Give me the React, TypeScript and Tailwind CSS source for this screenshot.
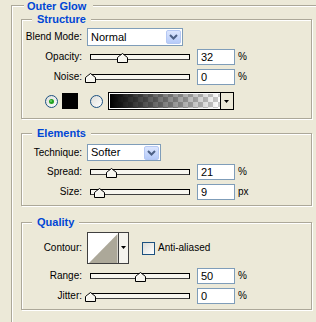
import { clsx } from "clsx";
import type { ReactNode } from "react";

const TRACK_START = 3;
const TRACK_SPAN = 99;

function GroupBox({
  title,
  className,
  legendClass,
  children,
}: {
  title: string;
  className?: string;
  legendClass?: string;
  children?: ReactNode;
}) {
  return (
    <div
      className={clsx(
        "relative border border-[#ACA899] shadow-[1px_1px_0_#fff,inset_1px_1px_0_#fff]",
        className
      )}
    >
      <span
        className={clsx(
          "absolute bg-[#ECE9D8] text-[11px] font-bold leading-[11px] text-[#0046D5]",
          legendClass ?? "-top-[6px] left-[10px] pl-[5px] pr-[5px]"
        )}
      >
        {title}
      </span>
      {children}
    </div>
  );
}

function Label({ children }: { children: ReactNode }) {
  return <span className="w-[60px] shrink-0 text-right">{children}</span>;
}

function Chevron() {
  return (
    <span className="ml-auto mr-[1px] flex h-[14px] w-[15px] items-center justify-center rounded-[2px] border border-[#B5C8F3] bg-gradient-to-b from-[#DCE6FE] to-[#B6CBF9]">
      <svg width="9" height="6" viewBox="0 0 9 6">
        <polyline points="1,1 4.5,4.5 8,1" fill="none" stroke="#4D6185" strokeWidth="2" />
      </svg>
    </span>
  );
}

function Select({ value, width }: { value: string; width: string }) {
  return (
    <div className={clsx("ml-[5px] flex h-full items-center border border-[#7F9DB9] bg-white", width)}>
      <span className="pl-[3px] text-[11px]">{value}</span>
      <Chevron />
    </div>
  );
}

function Thumb({ pct }: { pct: number }) {
  const left = TRACK_START + pct * TRACK_SPAN - 5;
  return (
    <svg
      width="11"
      height="10"
      viewBox="0 0 11 10"
      className="absolute top-[4px]"
      style={{ left }}
    >
      <path d="M0.5 9.5V4.5L5.5 0.5L10.5 4.5V9.5Z" fill="#F7F6EF" stroke="#000" />
      <path d="M1.5 8.5V5L5.5 1.8" fill="none" stroke="#fff" />
    </svg>
  );
}

function SliderRow({
  label,
  value,
  unit,
  pct,
  className,
}: {
  label: string;
  value: string;
  unit: string;
  pct: number;
  className?: string;
}) {
  return (
    <div className={clsx("flex h-4 items-center", className)}>
      <Label>{label}</Label>
      <div className="relative ml-[5px] h-4 w-[106px] shrink-0">
        <div className="ml-[3px] mt-[5px] h-[6px] w-[100px] border border-black border-b-[#404040] bg-[#F7F6EF]" />
        <Thumb pct={pct} />
      </div>
      <div className="ml-[4px] flex h-4 w-[38px] items-center border border-[#7F9DB9] bg-white pl-[3px] text-[11px]">
        {value}
      </div>
      <span className="ml-[3px] text-[10px]">{unit}</span>
    </div>
  );
}

function Radio({ checked }: { checked?: boolean }) {
  return (
    <svg width="13" height="13" viewBox="0 0 13 13">
      <defs>
        <linearGradient id={checked ? "rg1" : "rg2"} x1="0" y1="0" x2="1" y2="1">
          <stop offset="0" stopColor="#DCDCD7" />
          <stop offset="1" stopColor="#FFFFFF" />
        </linearGradient>
      </defs>
      <circle cx="6.5" cy="6.5" r="6" fill={`url(#${checked ? "rg1" : "rg2"})`} stroke="#1C5180" />
      {checked && <circle cx="6.5" cy="6.5" r="2.5" fill="#21A121" />}
      {checked && <circle cx="6" cy="6" r="1" fill="#6BD46B" />}
    </svg>
  );
}

function GradientSwatch() {
  return (
    <svg width="126" height="18" viewBox="0 0 126 18">
      <defs>
        <pattern id="chk" width="10" height="10" patternUnits="userSpaceOnUse">
          <rect width="10" height="10" fill="#FFFFFF" />
          <rect width="5" height="5" fill="#CBCBCB" />
          <rect x="5" y="5" width="5" height="5" fill="#CBCBCB" />
        </pattern>
        <linearGradient id="fade" x1="0" y1="0" x2="1" y2="0">
          <stop offset="0" stopColor="#000" />
          <stop offset="1" stopColor="#000" stopOpacity="0" />
        </linearGradient>
      </defs>
      <rect x="0.5" y="0.5" width="125" height="17" fill="#ECE9D8" stroke="#000" />
      <rect x="1" y="1" width="111" height="16" fill="#fff" />
      <rect x="2" y="2" width="110" height="14" fill="url(#chk)" />
      <rect x="2" y="2" width="110" height="14" fill="url(#fade)" />
      <line x1="112.5" y1="0" x2="112.5" y2="18" stroke="#000" />
      <path d="M116 8h5l-2.5 3z" fill="#000" />
    </svg>
  );
}

function ContourPicker() {
  return (
    <svg width="42" height="32" viewBox="0 0 42 32">
      <rect x="0.5" y="0.5" width="41" height="31" fill="#F5F4EE" stroke="#404040" />
      <rect x="1" y="1" width="30" height="30" fill="#FFFFFF" />
      <path d="M2 31L30.5 2V31Z" fill="#ACA899" />
      <line x1="31.5" y1="1" x2="31.5" y2="31" stroke="#404040" />
      <path d="M34 14h5l-2.5 3z" fill="#000" />
    </svg>
  );
}

export default function App() {
  return (
    <div className="relative h-[322px] w-[316px] overflow-hidden bg-[#ECE9D8] pl-[11px] pt-[5px] font-['Liberation_Sans',Arial,sans-serif] text-[10px] leading-none text-black">
      <GroupBox
        title="Outer Glow"
        className="h-[340px] w-[330px] pl-[9px] pt-[13px]"
        legendClass="-top-[5px] left-[12px] pl-[3px] pr-[7px]"
      >
        <GroupBox title="Structure" className="h-[100px] w-[291px] pt-[8px]">
          <div className="flex h-[18px] items-center">
            <Label>Blend Mode:</Label>
            <Select value="Normal" width="w-[96px]" />
          </div>
          <SliderRow className="mt-[3px]" label="Opacity:" value="32" unit="%" pct={0.32} />
          <SliderRow className="mt-[4px]" label="Noise:" value="0" unit="%" pct={0} />
          <div className="mt-[7px] flex h-[18px] items-center pl-[23px]">
            <Radio checked />
            <span className="ml-[4px] h-4 w-4 bg-black" />
            <span className="ml-[12px] flex">
              <Radio />
            </span>
            <span className="ml-[5px] flex">
              <GradientSwatch />
            </span>
          </div>
        </GroupBox>

        <GroupBox title="Elements" className="mt-[14px] h-[73px] w-[291px] pt-[10px]">
          <div className="flex h-[17px] items-center">
            <Label>Technique:</Label>
            <Select value="Softer" width="w-[74px]" />
          </div>
          <SliderRow className="mt-[3px]" label="Spread:" value="21" unit="%" pct={0.21} />
          <SliderRow className="mt-[4px]" label="Size:" value="9" unit="px" pct={0.09} />
        </GroupBox>

        <GroupBox title="Quality" className="mt-[16px] h-[88px] w-[291px] pt-[9px]">
          <div className="flex h-[32px] items-center">
            <Label>Contour:</Label>
            <span className="ml-[5px] flex">
              <ContourPicker />
            </span>
            <span className="ml-[13px] h-[13px] w-[13px] border border-[#1C5180] bg-gradient-to-br from-[#DCDCD7] to-white" />
            <span className="ml-[3px] text-[10px]">Anti-aliased</span>
          </div>
          <SliderRow className="mt-[4px]" label="Range:" value="50" unit="%" pct={0.5} />
          <SliderRow className="mt-[4px]" label="Jitter:" value="0" unit="%" pct={0} />
        </GroupBox>
      </GroupBox>
    </div>
  );
}
